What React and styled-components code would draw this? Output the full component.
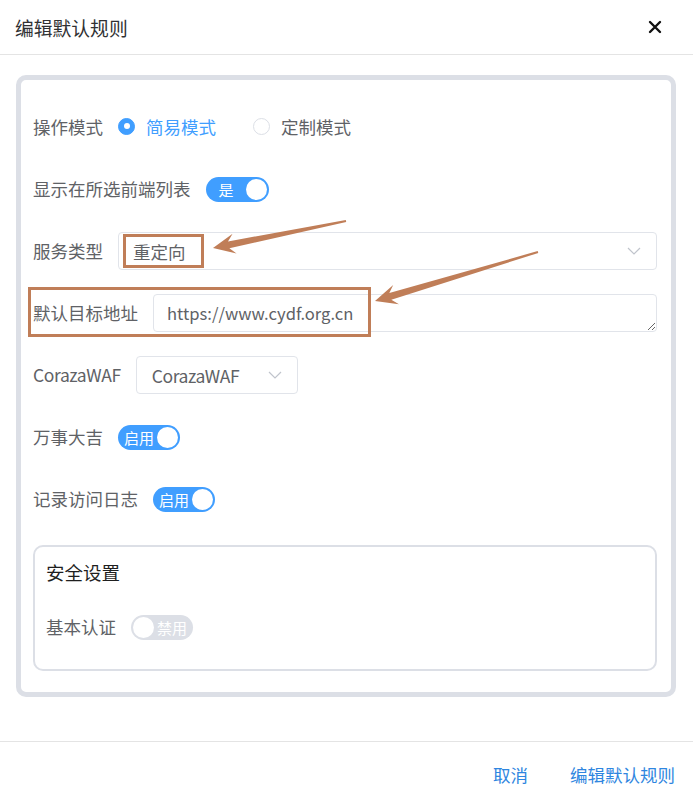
import React from 'react';
import styled, { createGlobalStyle } from 'styled-components';

const GlobalStyle = createGlobalStyle`
  html, body {
    margin: 0;
    padding: 0;
    background: #fff;
  }
  body {
    font-family: "Noto Sans CJK SC", "Noto Sans", sans-serif;
  }
`;

const BLUE = '#409eff';
const TEXT = '#606266';
const MARK = '#c07e58';

const Page = styled.div`
  position: relative;
  width: 693px;
  height: 802px;
  overflow: hidden;
`;

const Header = styled.div`
  height: 54px;
  border-bottom: 1px solid #e4e4e4;
  display: flex;
  align-items: center;
  justify-content: space-between;
  padding: 0 30px 0 15px;
`;

const Title = styled.div`
  font-size: 18.8px;
  color: #303133;
`;

const Close = styled.button`
  border: 0;
  background: none;
  padding: 0;
  width: 16px;
  height: 16px;
  display: flex;
  align-items: center;
  justify-content: center;
`;

const Body = styled.div`
  padding: 20px 17px 44px 16px;
`;

const Card = styled.div`
  border: 5px solid #dcdfe6;
  border-radius: 10px;
  padding: 28px 14px 21px 12px;
`;

const Rows = styled.div`
  display: flex;
  flex-direction: column;
  gap: 24px;
`;

const Row = styled.div`
  display: flex;
  align-items: center;
  height: 38px;
`;

const Label = styled.span`
  font-size: 17.5px;
  color: ${TEXT};
  margin-right: 15px;
  padding-bottom: 2px;
  white-space: nowrap;
  flex-shrink: 0;
  letter-spacing: ${p => (p.$latin ? '-0.4px' : '0')};
`;

const RadioItem = styled.span`
  display: inline-flex;
  align-items: center;
  gap: 11px;
  margin-right: 37px;
  font-size: 17.5px;
  color: ${p => (p.$checked ? BLUE : TEXT)};
  padding-bottom: 2px;
`;

const RadioDot = styled.span`
  box-sizing: border-box;
  width: 17px;
  height: 17px;
  border-radius: 50%;
  border: 1px solid ${p => (p.$checked ? BLUE : '#dcdfe6')};
  background: ${p => (p.$checked ? BLUE : '#fff')};
  display: flex;
  align-items: center;
  justify-content: center;
  &::after {
    content: '';
    width: 6px;
    height: 6px;
    border-radius: 50%;
    background: #fff;
  }
`;

const SwitchTrack = styled.span`
  box-sizing: border-box;
  display: inline-flex;
  align-items: center;
  flex-direction: ${p => (p.$on ? 'row' : 'row-reverse')};
  justify-content: space-between;
  width: ${p => p.$width}px;
  height: 25px;
  border-radius: 13px;
  background: ${p => (p.$on ? BLUE : '#dcdfe6')};
  padding: 0 2px 0 ${p => p.$padLeft}px;
  ${p => !p.$on && 'padding: 0 6px 0 2px;'}
`;

const SwitchText = styled.span`
  font-size: 15px;
  color: #fff;
  line-height: 1;
`;

const Knob = styled.span`
  width: 21px;
  height: 21px;
  border-radius: 50%;
  background: #fff;
`;

const Select = styled.div`
  box-sizing: border-box;
  height: 38px;
  ${p => (p.$width ? `width: ${p.$width}px;` : 'flex: 1;')}
  border: 1px solid #e1e4ea;
  border-radius: 4px;
  display: flex;
  align-items: center;
  justify-content: space-between;
  padding: 0 15px 0 ${p => p.$padLeft}px;
  font-size: 17.5px;
  color: ${TEXT};
  letter-spacing: ${p => (p.$latin ? '-0.4px' : '0')};
`;

const TextArea = styled.textarea`
  box-sizing: border-box;
  flex: 1;
  height: 38px;
  border: 1px solid #e1e4ea;
  border-radius: 4px;
  padding: 5px 13px;
  font-family: "Noto Sans CJK SC", "Noto Sans", sans-serif;
  font-size: 16.6px;
  line-height: 26px;
  color: ${TEXT};
  resize: vertical;
  outline: none;
  overflow: hidden;
`;

const Section = styled.div`
  margin-top: 27px;
  border: 2px solid #dcdfe6;
  border-radius: 10px;
  padding: 13px 12px 23px 11px;
`;

const SectionTitle = styled.div`
  font-size: 18.5px;
  color: #1f1f1f;
  line-height: 24px;
  margin-bottom: 24px;
`;

const Footer = styled.div`
  border-top: 1px solid #e4e4e4;
  height: 60px;
  display: flex;
  align-items: center;
  justify-content: flex-end;
  gap: 42px;
  padding-right: 18px;
  padding-top: 6px;
  box-sizing: border-box;
`;

const TextButton = styled.button`
  border: 0;
  background: none;
  padding: 0;
  font-family: inherit;
  font-size: 17.5px;
  color: #2f86e0;
`;

const Overlay = styled.svg`
  position: absolute;
  left: 0;
  top: 0;
  pointer-events: none;
`;

const Chevron = () => (
  <svg width="14" height="8" viewBox="0 0 14 8">
    <path d="M1 1 L7 7 L13 1" fill="none" stroke="#c0c4cc" strokeWidth="1.2" />
  </svg>
);

const Switch = ({ on, text, width = 62, padLeft = 6 }) => (
  <SwitchTrack $on={on} $width={width} $padLeft={padLeft}>
    <SwitchText>{text}</SwitchText>
    <Knob />
  </SwitchTrack>
);

function arrow(tail, tip) {
  const [x1, y1] = tail;
  const [x2, y2] = tip;
  const len = Math.hypot(x2 - x1, y2 - y1);
  const ux = (x2 - x1) / len;
  const uy = (y2 - y1) / len;
  const nx = -uy;
  const ny = ux;
  const p = (t, w) => `${x2 - ux * t + nx * w},${y2 - uy * t + ny * w}`;
  return [p(len, 1), p(16, 3.5), p(22, 10), `${x2},${y2}`, p(22, -10), p(16, -3.5), p(len, -1)].join(' ');
}

export default function App() {
  return (
    <Page>
      <GlobalStyle />
      <Header>
        <Title>编辑默认规则</Title>
        <Close aria-label="关闭">
          <svg width="14" height="14" viewBox="0 0 14 14">
            <path d="M2 2 L12 12 M12 2 L2 12" stroke="#111" strokeWidth="2.4" strokeLinecap="round" />
          </svg>
        </Close>
      </Header>

      <Body>
        <Card>
          <Rows>
            <Row>
              <Label>操作模式</Label>
              <RadioItem $checked>
                <RadioDot $checked />
                简易模式
              </RadioItem>
              <RadioItem>
                <RadioDot />
                定制模式
              </RadioItem>
            </Row>
            <Row>
              <Label>显示在所选前端列表</Label>
              <Switch on text="是" width={63} padLeft={13} />
            </Row>
            <Row>
              <Label>服务类型</Label>
              <Select $padLeft={14}>
                <span>重定向</span>
                <Chevron />
              </Select>
            </Row>
            <Row>
              <Label>默认目标地址</Label>
              <TextArea defaultValue="https://www.cydf.org.cn" rows={1} />
            </Row>
            <Row>
              <Label $latin>CorazaWAF</Label>
              <Select $width={162} $padLeft={15} $latin>
                <span>CorazaWAF</span>
                <Chevron />
              </Select>
            </Row>
            <Row>
              <Label>万事大吉</Label>
              <Switch on text="启用" />
            </Row>
            <Row>
              <Label>记录访问日志</Label>
              <Switch on text="启用" />
            </Row>
          </Rows>

          <Section>
            <SectionTitle>安全设置</SectionTitle>
            <Row>
              <Label>基本认证</Label>
              <Switch on={false} text="禁用" />
            </Row>
          </Section>
        </Card>
      </Body>

      <Footer>
        <TextButton>取消</TextButton>
        <TextButton>编辑默认规则</TextButton>
      </Footer>

      <Overlay width="693" height="802" viewBox="0 0 693 802">
        <rect x="124.5" y="235.5" width="78" height="31" fill="none" stroke={MARK} strokeWidth="3" />
        <rect x="29.5" y="288.5" width="340" height="47" fill="none" stroke={MARK} strokeWidth="3" />
        <polygon points={arrow([346, 221], [213, 248])} fill={MARK} />
        <polygon points={arrow([538, 252], [375, 301])} fill={MARK} />
      </Overlay>
    </Page>
  );
}
